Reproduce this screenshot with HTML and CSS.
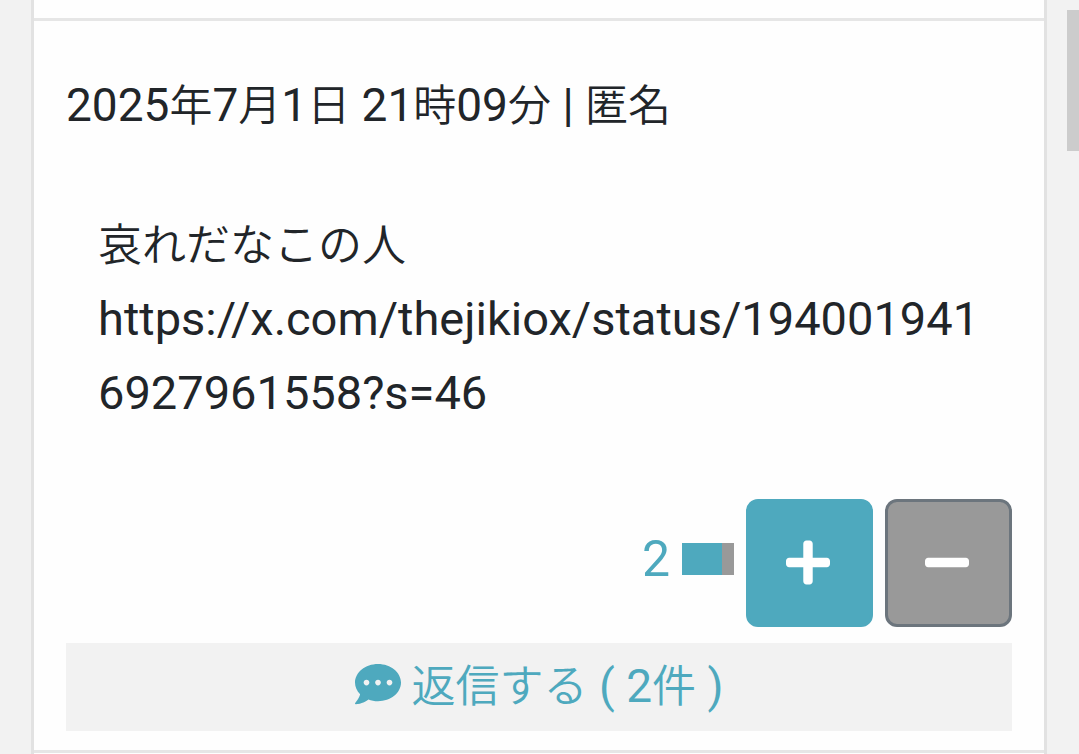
FILE: index.html
```html
<!DOCTYPE html>
<html lang="ja">
<head>
    <meta charset="UTF-8">
    <meta name="viewport" content="width=device-width, initial-scale=1.0">
    <title>コメント</title>
    <link rel="stylesheet" href="styles.css">
</head>
<body>
    <main class="comment-list">
        <article class="comment">
            <header class="comment-header">2025<span class="ja">年</span>7<span class="ja">月</span>1<span class="ja">日</span> 21<span class="ja">時</span>09<span class="ja">分</span> | <span class="ja">匿名</span></header>

            <div class="comment-body">
                <p><span class="ja">哀れだなこの人</span></p>
                <p>https://x.com/thejikiox/status/1940019416927961558?s=46</p>
            </div>

            <div class="vote">
                <div class="vote-score">
                    <span class="vote-count">2</span>
                    <div class="vote-bar">
                        <div class="vote-bar-plus" style="width: 77%"></div>
                    </div>
                </div>
                <button type="button" class="vote-btn plus" aria-label="プラス">
                    <svg viewBox="0 0 448 512"><path d="M416 208H272V64c0-17.67-14.33-32-32-32h-32c-17.67 0-32 14.33-32 32v144H32c-17.67 0-32 14.33-32 32v32c0 17.67 14.33 32 32 32h144v144c0 17.67 14.33 32 32 32h32c17.67 0 32-14.33 32-32V304h144c17.67 0 32-14.33 32-32v-32c0-17.67-14.33-32-32-32z"/></svg>
                </button>
                <button type="button" class="vote-btn minus" aria-label="マイナス">
                    <svg viewBox="0 0 448 512"><path d="M416 208H32c-17.67 0-32 14.33-32 32v32c0 17.67 14.33 32 32 32h384c17.67 0 32-14.33 32-32v-32c0-17.67-14.33-32-32-32z"/></svg>
                </button>
            </div>

            <a href="#" class="reply">
                <svg class="reply-icon" viewBox="0 0 512 512"><path d="M256 32C114.6 32 0 125.1 0 240c0 49.6 21.4 95 57 130.7C44.5 421.1 2.7 466 2.2 466.500c-2.200 2.300-2.800 5.700-1.500 8.700S4.800 480 8 480c66.300 0 116-31.800 140.600-51.400 32.700 12.300 69 19.400 107.400 19.400 141.400 0 256-93.100 256-208S397.400 32 256 32zM128 272c-17.700 0-32-14.300-32-32s14.300-32 32-32 32 14.300 32 32-14.300 32-32 32zm128 0c-17.700 0-32-14.300-32-32s14.300-32 32-32 32 14.300 32 32-14.300 32-32 32zm128 0c-17.700 0-32-14.300-32-32s14.300-32 32-32 32 14.300 32 32-14.300 32-32 32z"/></svg>
                <span><span class="ja">返信する</span> ( 2<span class="ja">件</span> )</span>
            </a>
        </article>
    </main>
    <div class="scroll-thumb"></div>
</body>
</html>
```

FILE: styles.css
```css
* {
    margin: 0;
    padding: 0;
    box-sizing: border-box;
}

body {
    font-family: Roboto, "Noto Sans CJK JP", sans-serif;
    font-size: 46px;
    line-height: 74px;
    color: #212529;
    background: #f2f2f2;
    padding: 0 32px 0 31px;
}

.ja {
    font-family: "Noto Sans CJK JP", sans-serif;
    font-size: 44px;
    font-weight: 350;
    line-height: 1;
}

.comment-list {
    background: #fefefe;
    border: solid #e2e2e2;
    border-width: 0 3px;
    min-height: 100vh;
    padding-top: 18px;
}

.comment {
    border: solid #e6e6e6;
    border-width: 3px 0;
    padding: 47px 32px 19px;
}

.comment-header .ja {
    font-size: 43px;
}

.comment-body {
    padding: 66px 32px 69px;
    font-size: 47px;
    overflow-wrap: anywhere;
}

.vote {
    display: flex;
    align-items: center;
    justify-content: flex-end;
    gap: 12px;
    margin-bottom: 16px;
}

.vote-score {
    display: flex;
    align-items: center;
    gap: 12px;
    padding-bottom: 8px;
}

.vote-count {
    font-size: 50px;
    color: #4ea9be;
}

.vote-bar {
    width: 52px;
    height: 32px;
    background: #999;
}

.vote-bar-plus {
    height: 100%;
    background: #4ea9be;
}

.vote-btn {
    display: flex;
    align-items: center;
    justify-content: center;
    width: 127px;
    height: 128px;
    padding: 0 3px 2px 0;
    border: 3px solid #4ea9be;
    border-radius: 12px;
    background: #4ea9be;
    cursor: pointer;
}

.vote-btn.minus {
    background: #999;
    border-color: #6c757d;
}

.vote-btn svg {
    width: 44px;
    height: 51px;
    fill: #fff;
}

.reply {
    display: flex;
    align-items: center;
    justify-content: center;
    gap: 11px;
    height: 88px;
    padding-bottom: 2px;
    background: #f2f2f2;
    color: #4ea9be;
    text-decoration: none;
}

.reply-icon {
    width: 46px;
    height: 46px;
    margin-bottom: 4px;
    fill: #4ea9be;
}

.scroll-thumb {
    position: fixed;
    top: 10px;
    right: 0;
    width: 12px;
    height: 141px;
    background: #ccc;
}
```
